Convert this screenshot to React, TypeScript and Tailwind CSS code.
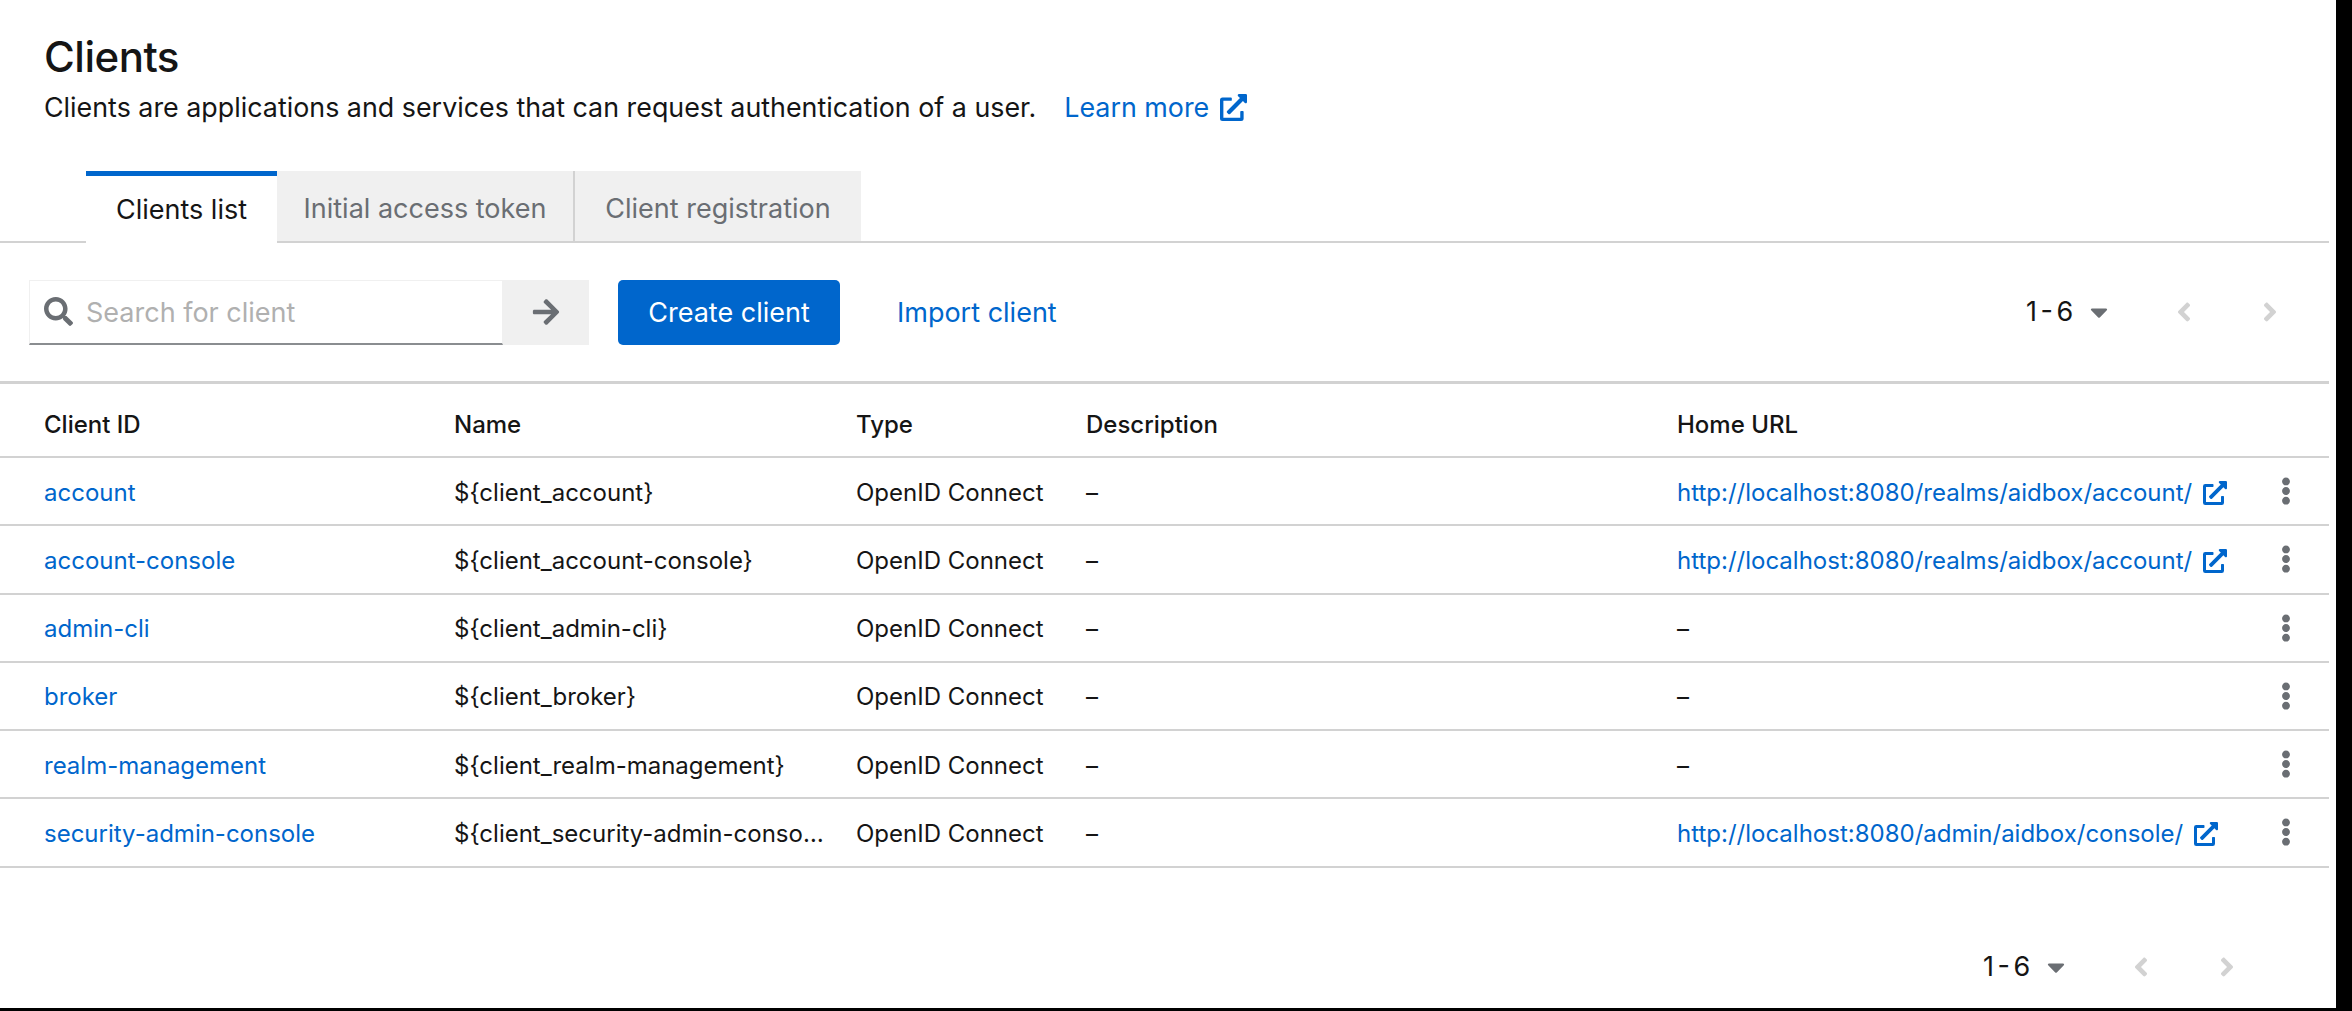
import { FaArrowRight, FaAngleLeft, FaAngleRight, FaCaretDown, FaEllipsisV, FaExternalLinkAlt, FaSearch } from "react-icons/fa";

const clients = [
  { id: "account", name: "${client_account}", url: "http://localhost:8080/realms/aidbox/account/" },
  { id: "account-console", name: "${client_account-console}", url: "http://localhost:8080/realms/aidbox/account/" },
  { id: "admin-cli", name: "${client_admin-cli}", url: "" },
  { id: "broker", name: "${client_broker}", url: "" },
  { id: "realm-management", name: "${client_realm-management}", url: "" },
  { id: "security-admin-console", name: "${client_security-admin-console}", url: "http://localhost:8080/admin/aidbox/console/" },
];

const rowCols = "grid grid-cols-[410px_402px_230px_591px_1fr_64px] items-center pl-[44px]";

function Pager() {
  return (
    <div className="flex items-center text-[27px] text-[#151515]">
      <span className="w-[48px] whitespace-nowrap [word-spacing:-4px]">1 - 6</span>
      <FaCaretDown className="ml-[11px] w-[28px] h-[28px] text-[#6a6e73]" />
      <FaAngleLeft className="ml-[60px] w-[22px] h-[30px] text-[#d2d2d2]" />
      <FaAngleRight className="ml-[64px] w-[22px] h-[30px] text-[#d2d2d2]" />
    </div>
  );
}

export default function App() {
  return (
    <div className="bg-black h-[1011px] font-['Inter','Noto_Sans',sans-serif] overflow-hidden">
      <div className="bg-white w-[2336px] h-[1008px]">
        {/* Header */}
        <div className="pl-[44px] pt-[33px]">
          <h1 className="text-[42px] leading-[48px] font-medium text-[#151515] tracking-[-0.5px]">Clients</h1>
          <p className="mt-[8px] flex items-center text-[26.85px] leading-[36px] text-[#151515]">
            Clients are applications and services that can request authentication of a user.
            <a className="ml-[28px] flex items-center text-[#06c]">
              Learn more
              <FaExternalLinkAlt className="ml-[11px] w-[27px] h-[27px]" />
            </a>
          </p>
        </div>

        {/* Tabs */}
        <div className="mt-[46px] w-[2329px] h-[72px] pl-[86px] flex border-b-2 border-[#d2d2d2] text-[27px]">
          <div className="w-[191px] h-[72px] pt-[2px] flex items-center justify-center bg-white border-t-[5px] border-[#06c] text-[#151515]">
            Clients list
          </div>
          <div className="w-[298px] pt-[6px] flex items-center justify-center bg-[#f0f0f0] border-r-2 border-[#d2d2d2] text-[#6a6e73]">
            Initial access token
          </div>
          <div className="w-[286px] pt-[6px] flex items-center justify-center bg-[#f0f0f0] text-[#6a6e73]">
            Client registration
          </div>
        </div>

        {/* Toolbar */}
        <div className="w-[2329px] h-[141px] pl-[29px] pr-[48px] flex items-center justify-between border-b-[3px] border-[#d2d2d2]">
          <div className="flex items-center">
            <div className="w-[474px] h-[65px] pl-[14px] flex items-center border border-[#f0f0f0] border-b-2 border-b-[#8a8d90]">
              <FaSearch className="w-[29px] h-[29px] text-[#6a6e73]" />
              <span className="ml-[13px] pt-[3px] text-[27px] text-[#b0b0b0]">Search for client</span>
            </div>
            <div className="w-[86px] h-[65px] flex items-center justify-center bg-[#f0f0f0]">
              <FaArrowRight className="w-[30px] h-[30px] text-[#6a6e73]" />
            </div>
            <button className="ml-[29px] w-[222px] h-[65px] pt-[2px] rounded-[5px] bg-[#06c] text-white text-[27px]">
              Create client
            </button>
            <a className="ml-[57px] mt-[3px] text-[27px] text-[#06c]">Import client</a>
          </div>
          <Pager />
        </div>

        {/* Table */}
        <div className="w-[2329px] text-[24px] text-[#151515]">
          <div className={`${rowCols} h-[74px] pt-[10px] font-medium border-b-2 border-[#d2d2d2]`}>
            <span>Client ID</span>
            <span>Name</span>
            <span>Type</span>
            <span>Description</span>
            <span>Home URL</span>
          </div>
          {clients.map((c) => (
            <div key={c.id} className={`${rowCols} h-[68.25px] pt-[3px] border-b-2 border-[#d2d2d2]`}>
              <a className="text-[#06c]">{c.id}</a>
              <span className="truncate pr-[32px]">{c.name}</span>
              <span>OpenID Connect</span>
              <span>–</span>
              {c.url ? (
                <a className="flex items-center text-[#06c] whitespace-nowrap">
                  {c.url}
                  <FaExternalLinkAlt className="ml-[11px] w-[24px] h-[24px] shrink-0" />
                </a>
              ) : (
                <span>–</span>
              )}
              <FaEllipsisV className="justify-self-center -ml-[22px] -mt-[3px] w-[28px] h-[28px] text-[#6a6e73]" />
            </div>
          ))}
        </div>

        {/* Bottom pagination */}
        <div className="mt-[79px] pr-[91px] w-[2329px] flex justify-end">
          <Pager />
        </div>
      </div>
    </div>
  );
}
